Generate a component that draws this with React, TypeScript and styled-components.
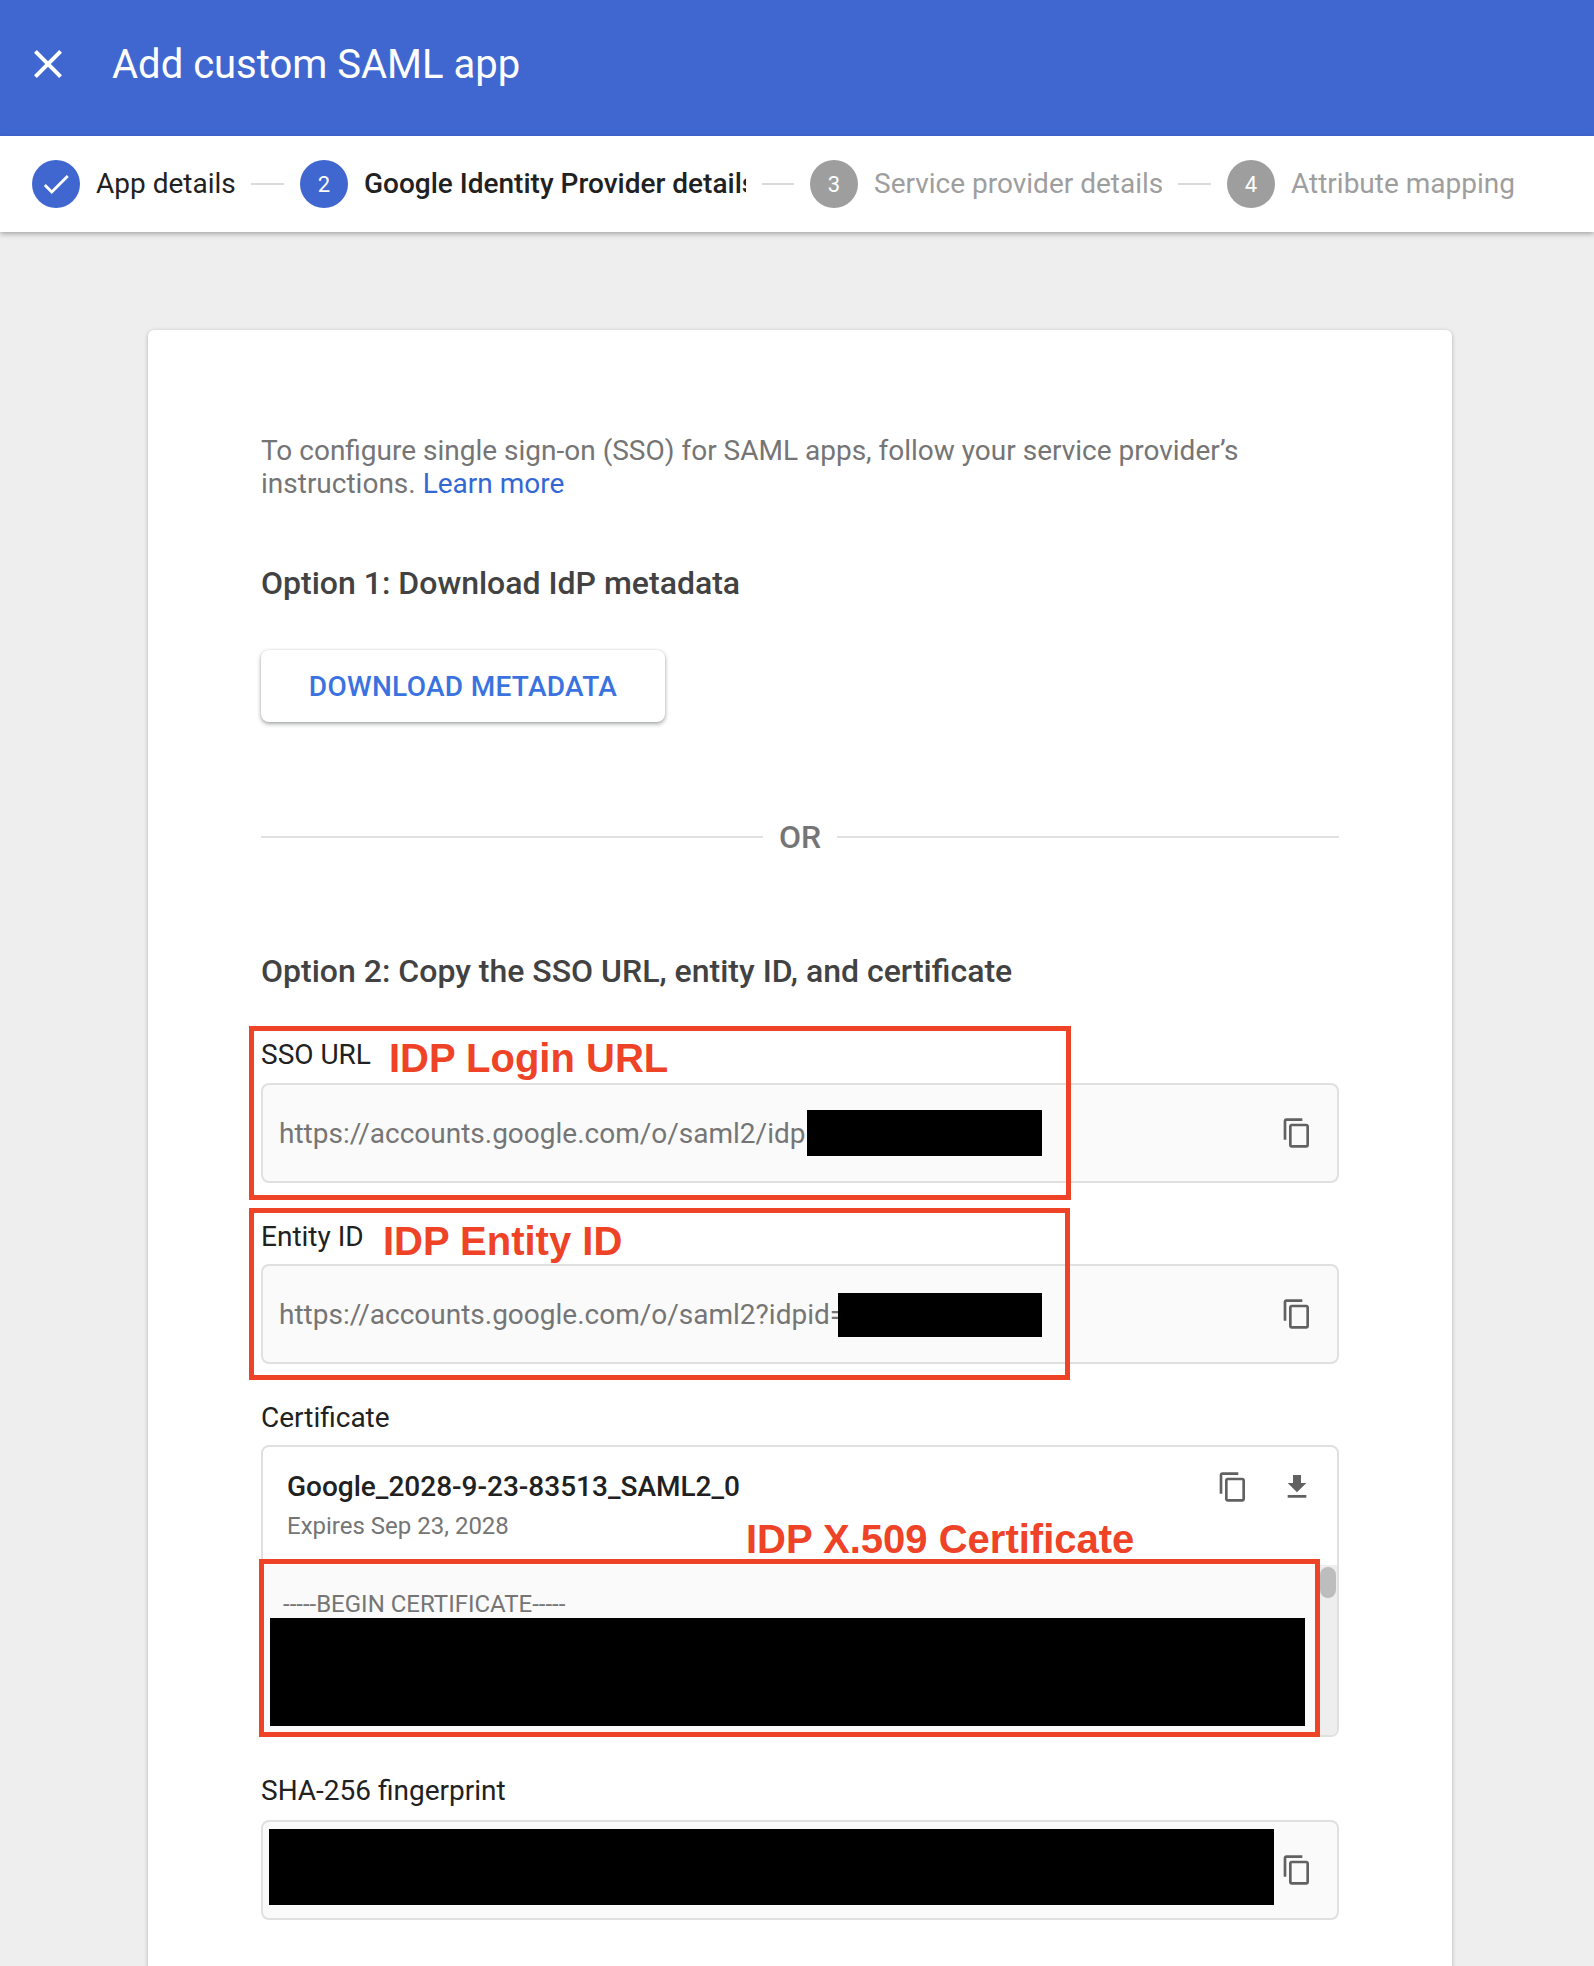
import React from 'react'
import styled, { createGlobalStyle } from 'styled-components'
import { MdCheck, MdClose, MdContentCopy, MdFileDownload } from 'react-icons/md'

const GlobalStyle = createGlobalStyle`
    html, body {
        margin: 0;
        height: 1966px;
        overflow: hidden;
        background: #eeeeee;
        font-family: Roboto, 'Liberation Sans', sans-serif;
    }
    * {
        box-sizing: border-box;
    }
`

const steps = [
    { label: 'App details', state: 'done', labelWidth: 139 },
    { label: 'Google Identity Provider details', state: 'active', labelWidth: 382 },
    { label: 'Service provider details', state: 'todo', labelWidth: 288 },
    { label: 'Attribute mapping', state: 'todo', labelWidth: 224 },
]

const App = () => {
    return (
        <Page>
            <GlobalStyle />
            <Header>
                <CloseButton><MdClose /></CloseButton>
                <Title>Add custom SAML app</Title>
            </Header>
            <Stepper>
                {steps.map((step, i) => (
                    <React.Fragment key={step.label}>
                        {i > 0 && <StepLine $width={i === 2 ? 32 : 33} />}
                        <StepCircle $todo={step.state === 'todo'}>
                            {step.state === 'done' ? <MdCheck /> : i + 1}
                        </StepCircle>
                        <StepLabel $state={step.state} $width={step.labelWidth}>
                            {step.label}
                        </StepLabel>
                    </React.Fragment>
                ))}
            </Stepper>
            <Card>
                <Intro>
                    To configure single sign-on (SSO) for SAML apps, follow your service provider’s
                    <br />
                    instructions. <a href="/">Learn more</a>
                </Intro>
                <OptionTitle $top={63}>Option 1: Download IdP metadata</OptionTitle>
                <DownloadButton>DOWNLOAD METADATA</DownloadButton>
                <Divider>OR</Divider>
                <OptionTitle $top={94}>Option 2: Copy the SSO URL, entity ID, and certificate</OptionTitle>

                <FieldLabel $top={48} $bottom={12}>SSO URL</FieldLabel>
                <Field>
                    <FieldText>https://accounts.google.com/o/saml2/idp</FieldText>
                    <IconButton><MdContentCopy /></IconButton>
                    <Redaction $top={25} $left={544} $width={235} $height={46} />
                </Field>

                <FieldLabel>Entity ID</FieldLabel>
                <Field>
                    <FieldText>https://accounts.google.com/o/saml2?idpid=</FieldText>
                    <IconButton><MdContentCopy /></IconButton>
                    <Redaction $top={27} $left={575} $width={204} $height={44} />
                </Field>

                <FieldLabel>Certificate</FieldLabel>
                <CertBox>
                    <CertHeader>
                        <div>
                            <CertName>Google_2028-9-23-83513_SAML2_0</CertName>
                            <CertExpiry>Expires Sep 23, 2028</CertExpiry>
                        </div>
                        <CertActions>
                            <IconButton><MdContentCopy /></IconButton>
                            <IconButton><MdFileDownload /></IconButton>
                        </CertActions>
                    </CertHeader>
                    <CertBody>
                        <CertText>-----BEGIN CERTIFICATE-----</CertText>
                        <ScrollTrack><ScrollThumb /></ScrollTrack>
                    </CertBody>
                    <Redaction $top={171} $left={7} $width={1035} $height={108} />
                </CertBox>

                <FieldLabel $bottom={13}>SHA-256 fingerprint</FieldLabel>
                <Field>
                    <IconButton><MdContentCopy /></IconButton>
                    <Redaction $top={7} $left={6} $width={1005} $height={76} />
                </Field>

                <Annotation $top={696} $left={249} $width={822} $height={174}>
                    <AnnotationLabel $left={135} $top={4}>IDP Login URL</AnnotationLabel>
                </Annotation>
                <Annotation $top={878} $left={249} $width={821} $height={172}>
                    <AnnotationLabel $left={129} $top={5}>IDP Entity ID</AnnotationLabel>
                </Annotation>
                <Annotation $top={1229} $left={259} $width={1061} $height={178}>
                    <AnnotationLabel $left={482} $top={-48}>IDP X.509 Certificate</AnnotationLabel>
                </Annotation>
            </Card>
        </Page>
    )
}

export default App

const Page = styled.div`
    width: 1594px;
    height: 1966px;
    overflow: hidden;
    background: #eeeeee;
`

const Header = styled.header`
    height: 136px;
    background: #4067d0;
    color: #ffffff;
    display: flex;
    align-items: center;
    padding: 0 0 8px 24px;
`

const CloseButton = styled.div`
    width: 48px;
    height: 48px;
    svg {
        display: block;
        width: 48px;
        height: 48px;
    }
`

const Title = styled.h1`
    margin: 0 0 0 40px;
    font-size: 40px;
    font-weight: 400;
`

const Stepper = styled.div`
    position: relative;
    height: 96px;
    background: #ffffff;
    display: flex;
    align-items: center;
    padding-left: 32px;
    box-shadow: 0 2px 5px rgba(0, 0, 0, 0.3);
`

const StepCircle = styled.div<{ $todo?: boolean }>`
    width: 48px;
    height: 48px;
    flex: none;
    border-radius: 50%;
    background: ${(p) => (p.$todo ? '#9e9e9e' : '#4067d0')};
    color: #ffffff;
    display: flex;
    align-items: center;
    justify-content: center;
    font-size: 22px;
    svg {
        width: 34px;
        height: 34px;
    }
`

const StepLabel = styled.div<{ $state: string; $width: number }>`
    width: ${(p) => p.$width}px;
    flex: none;
    margin-left: 16px;
    padding-bottom: 2px;
    overflow: hidden;
    white-space: nowrap;
    font-size: 28px;
    font-weight: ${(p) => (p.$state === 'active' ? 500 : 400)};
    color: ${(p) => (p.$state === 'todo' ? '#9e9e9e' : '#212121')};
`

const StepLine = styled.div<{ $width: number }>`
    width: ${(p) => p.$width}px;
    height: 2px;
    flex: none;
    margin: 0 16px;
    background: #dadada;
`

const Card = styled.main`
    position: relative;
    width: 1304px;
    min-height: 1800px;
    margin: 98px 0 0 148px;
    padding: 104px 113px 0;
    background: #ffffff;
    border-radius: 6px;
    box-shadow: 0 1px 4px rgba(0, 0, 0, 0.25);
`

const Intro = styled.p`
    margin: 0;
    font-size: 28px;
    line-height: 33px;
    color: #757575;
    a {
        color: #3367d6;
        text-decoration: none;
    }
`

const OptionTitle = styled.h2<{ $top: number }>`
    margin: ${(p) => p.$top}px 0 0;
    font-size: 32px;
    line-height: 40px;
    font-weight: 500;
    color: #424242;
`

const DownloadButton = styled.button`
    display: block;
    width: 404px;
    height: 72px;
    margin-top: 47px;
    border: none;
    border-radius: 8px;
    background: #ffffff;
    box-shadow: 0 2px 4px rgba(60, 64, 67, 0.45), 0 0 2px rgba(60, 64, 67, 0.15);
    font-family: inherit;
    font-size: 28px;
    font-weight: 500;
    letter-spacing: 0.3px;
    color: #3a73e0;
`

const Divider = styled.div`
    display: flex;
    align-items: center;
    gap: 16px;
    height: 40px;
    margin-top: 95px;
    font-size: 32px;
    font-weight: 500;
    color: #757575;
    &::before,
    &::after {
        content: '';
        flex: 1;
        height: 2px;
        background: #e0e0e0;
    }
`

const FieldLabel = styled.div<{ $top?: number; $bottom?: number }>`
    margin: ${(p) => p.$top ?? 38}px 0 ${(p) => p.$bottom ?? 11}px;
    font-size: 28px;
    line-height: 32px;
    color: #212121;
`

const Field = styled.div`
    position: relative;
    height: 100px;
    display: flex;
    align-items: center;
    justify-content: space-between;
    padding: 0 24px 0 16px;
    background: #fafafa;
    border: 2px solid #e0e0e0;
    border-radius: 8px;
`

const FieldText = styled.div`
    font-size: 28px;
    color: #757575;
    white-space: nowrap;
`

const IconButton = styled.div`
    width: 32px;
    height: 32px;
    margin-left: auto;
    color: #616161;
    svg {
        display: block;
        width: 32px;
        height: 32px;
    }
`

const Redaction = styled.div<{ $top: number; $left: number; $width: number; $height: number }>`
    position: absolute;
    top: ${(p) => p.$top}px;
    left: ${(p) => p.$left}px;
    width: ${(p) => p.$width}px;
    height: ${(p) => p.$height}px;
    background: #000000;
`

const CertBox = styled.div`
    position: relative;
    height: 292px;
    border: 2px solid #e0e0e0;
    border-radius: 8px;
    overflow: hidden;
`

const CertHeader = styled.div`
    height: 118px;
    display: flex;
    justify-content: space-between;
    padding: 22px 24px 0 24px;
`

const CertName = styled.div`
    font-size: 28px;
    line-height: 36px;
    font-weight: 500;
    color: #212121;
`

const CertExpiry = styled.div`
    margin-top: 6px;
    font-size: 24px;
    line-height: 30px;
    color: #757575;
`

const CertActions = styled.div`
    display: flex;
    gap: 32px;
    height: 40px;
    padding-top: 2px;
`

const CertBody = styled.div`
    position: relative;
    height: 172px;
    padding: 23px 20px;
    background: #fafafa;
`

const CertText = styled.div`
    font-size: 24px;
    line-height: 32px;
    color: #757575;
`

const ScrollTrack = styled.div`
    position: absolute;
    top: 0;
    right: 0;
    bottom: 0;
    width: 18px;
    background: #eeeeee;
`

const ScrollThumb = styled.div`
    width: 16px;
    height: 31px;
    margin: 2px 0 0 1px;
    border-radius: 8px;
    background: #bdbdbd;
`

const Annotation = styled.div<{ $top: number; $left: number; $width: number; $height: number }>`
    position: absolute;
    top: ${(p) => p.$top}px;
    left: ${(p) => p.$left - 148}px;
    width: ${(p) => p.$width}px;
    height: ${(p) => p.$height}px;
    border: 5px solid #ee4326;
    pointer-events: none;
`

const AnnotationLabel = styled.span<{ $top: number; $left: number }>`
    position: absolute;
    top: ${(p) => p.$top}px;
    left: ${(p) => p.$left}px;
    font-family: 'Liberation Sans', sans-serif;
    font-size: 40px;
    line-height: 46px;
    font-weight: 700;
    color: #ee4326;
    white-space: nowrap;
`
